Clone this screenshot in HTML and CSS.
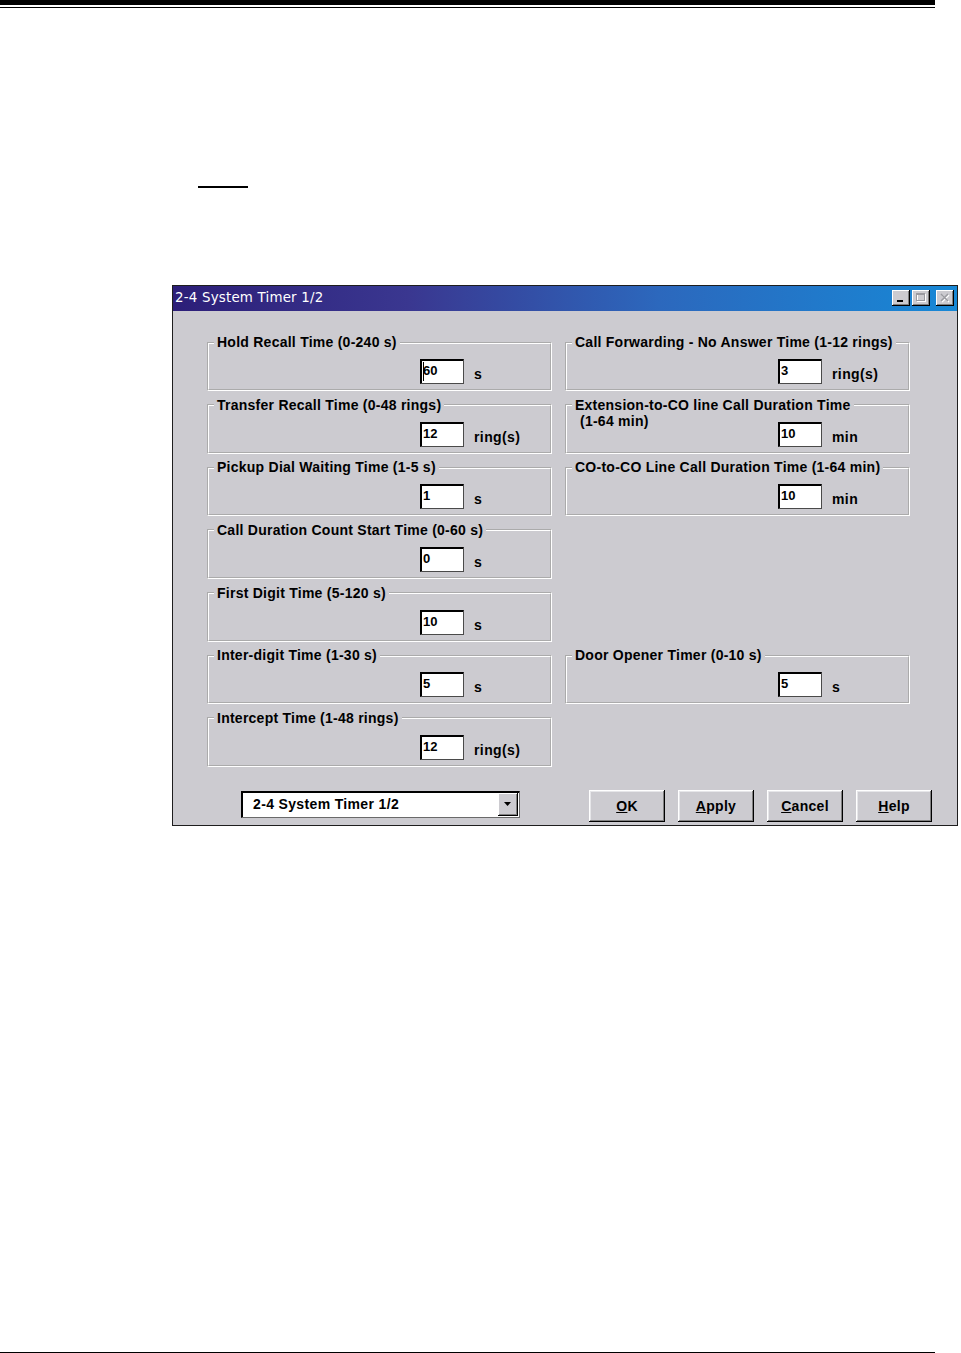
FILE: index.html
```html
<!DOCTYPE html>
<html>
<head>
    <meta charset="UTF-8">
    <title>2-4 System Timer 1/2</title>
    <link rel="stylesheet" href="styles.css">
</head>
<body>

    <div class="page-rule">
        <div class="rule-thick"></div>
        <div class="rule-thin"></div>
    </div>

    <div class="note-mark"></div>

    <div class="dialog">
        <div class="titlebar">
            <span class="title">2-4 System Timer 1/2</span>
            <div class="title-buttons">
                <span class="tb-btn">
                    <svg width="12" height="10" viewBox="0 0 12 10"><rect x="2" y="7" width="6" height="2" fill="#000"/></svg>
                </span>
                <span class="tb-btn">
                    <svg width="12" height="10" viewBox="0 0 12 10"><rect x="2.5" y="1.5" width="8" height="7" fill="none" stroke="#fff"/><rect x="1.5" y="0.5" width="8" height="7" fill="none" stroke="#9a9aa0"/><rect x="1.5" y="0.5" width="8" height="1.5" fill="#9a9aa0"/></svg>
                </span>
                <span class="tb-btn close">
                    <svg width="12" height="10" viewBox="0 0 12 10"><path d="M3 2 L10 9 M10 2 L3 9" stroke="#fff" stroke-width="1.5"/><path d="M2 1 L9 8 M9 1 L2 8" stroke="#9a9aa0" stroke-width="1.5"/></svg>
                </span>
            </div>
        </div>

        <div class="dialog-body">
            <div class="timer-grid">

                <fieldset class="group col-l r1">
                    <legend>Hold Recall Time (0-240 s)</legend>
                    <div class="group-row">
                        <span class="field"><span class="caret"></span>60</span>
                        <span class="unit">s</span>
                    </div>
                </fieldset>

                <fieldset class="group col-l r2">
                    <legend>Transfer Recall Time (0-48 rings)</legend>
                    <div class="group-row">
                        <span class="field">12</span>
                        <span class="unit">ring(s)</span>
                    </div>
                </fieldset>

                <fieldset class="group col-l r3">
                    <legend>Pickup Dial Waiting Time (1-5 s)</legend>
                    <div class="group-row">
                        <span class="field">1</span>
                        <span class="unit">s</span>
                    </div>
                </fieldset>

                <fieldset class="group col-l r4">
                    <legend>Call Duration Count Start Time (0-60 s)</legend>
                    <div class="group-row">
                        <span class="field">0</span>
                        <span class="unit">s</span>
                    </div>
                </fieldset>

                <fieldset class="group col-l r5">
                    <legend>First Digit Time (5-120 s)</legend>
                    <div class="group-row">
                        <span class="field">10</span>
                        <span class="unit">s</span>
                    </div>
                </fieldset>

                <fieldset class="group col-l r6">
                    <legend>Inter-digit Time (1-30 s)</legend>
                    <div class="group-row">
                        <span class="field">5</span>
                        <span class="unit">s</span>
                    </div>
                </fieldset>

                <fieldset class="group col-l r7">
                    <legend>Intercept Time (1-48 rings)</legend>
                    <div class="group-row">
                        <span class="field">12</span>
                        <span class="unit">ring(s)</span>
                    </div>
                </fieldset>

                <fieldset class="group col-r r1">
                    <legend>Call Forwarding - No Answer Time (1-12 rings)</legend>
                    <div class="group-row">
                        <span class="field">3</span>
                        <span class="unit">ring(s)</span>
                    </div>
                </fieldset>

                <fieldset class="group col-r r2">
                    <legend>Extension-to-CO line Call Duration Time</legend>
                    <div class="group-row with-sub">
                        <span class="sub-label">(1-64 min)</span>
                        <span class="field">10</span>
                        <span class="unit">min</span>
                    </div>
                </fieldset>

                <fieldset class="group col-r r3">
                    <legend>CO-to-CO Line Call Duration Time (1-64 min)</legend>
                    <div class="group-row">
                        <span class="field">10</span>
                        <span class="unit">min</span>
                    </div>
                </fieldset>

                <fieldset class="group col-r r6">
                    <legend>Door Opener Timer (0-10 s)</legend>
                    <div class="group-row">
                        <span class="field">5</span>
                        <span class="unit">s</span>
                    </div>
                </fieldset>

            </div>

            <div class="dialog-footer">
                <div class="combo">
                    <span class="combo-text">2-4 System Timer 1/2</span>
                    <span class="combo-arrow">
                        <svg width="8" height="5" viewBox="0 0 8 5"><path d="M0 0 H7 L3.5 4 Z" fill="#000"/></svg>
                    </span>
                </div>
                <div class="buttons">
                    <button><u>O</u>K</button>
                    <button><u>A</u>pply</button>
                    <button><u>C</u>ancel</button>
                    <button><u>H</u>elp</button>
                </div>
            </div>
        </div>
    </div>

    <div class="page-foot"></div>

</body>
</html>
```

FILE: styles.css
```css
:root {
    --face: #cccbd0;
    --ui-font: "Liberation Sans", Arial, Helvetica, sans-serif;
}

body {
    margin: 0;
    height: 1353px;
    display: flex;
    flex-direction: column;
    background-color: #fff;
    font-family: var(--ui-font);
}

.page-rule {
    width: 935px;
}

.rule-thick {
    height: 5px;
    background-color: #000;
}

.rule-thin {
    height: 1px;
    margin-top: 2px;
    background-color: #000;
}

.note-mark {
    width: 50px;
    height: 2px;
    margin: 178px 0 0 198px;
    background-color: #000;
}

.page-foot {
    width: 935px;
    height: 1px;
    margin-top: auto;
    background-color: #000;
}

/* dialog window */

.dialog {
    width: 786px;
    box-sizing: border-box;
    margin: 97px 0 0 172px;
    border: 1px solid #1e1e1e;
    background-color: var(--face);
}

.titlebar {
    height: 25px;
    display: flex;
    align-items: center;
    padding: 0 3px 2px 2px;
    box-sizing: border-box;
    background: linear-gradient(to right, #2c1e78 0%, #3a3790 30%, #2c68bd 62%, #1788d6 100%);
    color: #fff;
}

.title {
    flex: 1;
    font-family: "DejaVu Sans", var(--ui-font);
    font-size: 13.4px;
    letter-spacing: 0.2px;
}

.title-buttons {
    display: flex;
    gap: 2px;
}

.tb-btn {
    width: 18px;
    height: 16px;
    box-sizing: border-box;
    display: flex;
    align-items: center;
    justify-content: center;
    background-color: var(--face);
    box-shadow: inset -1px -1px 0 #000, inset 1px 1px 0 #fff, inset -2px -2px 0 #808080;
}

.tb-btn.close {
    margin-left: 4px;
}

.dialog-body {
    padding: 24px 25px 3px 34px;
}

/* group boxes */

.timer-grid {
    display: grid;
    grid-template-columns: 345px 345px;
    grid-template-rows: repeat(7, 56px);
    column-gap: 13px;
    row-gap: 6.67px;
}

.col-l { grid-column: 1; }
.col-r { grid-column: 2; }
.r1 { grid-row: 1; }
.r2 { grid-row: 2; }
.r3 { grid-row: 3; }
.r4 { grid-row: 4; }
.r5 { grid-row: 5; }
.r6 { grid-row: 6; }
.r7 { grid-row: 7; }

.group {
    margin: 0;
    padding: 0;
    min-width: 0;
    border: 2px groove #fff;
}

.group legend {
    margin-left: 5px;
    padding: 0 3px;
    font-size: 14px;
    line-height: 15px;
    letter-spacing: 0.25px;
    font-weight: bold;
    color: #000;
}

.group-row {
    display: flex;
    align-items: flex-end;
    margin-top: 9px;
    padding-left: 211px;
}

.group-row.with-sub {
    padding-left: 13px;
}

.sub-label {
    width: 198px;
    align-self: flex-start;
    margin-top: -8px;
    font-size: 14px;
    line-height: 15px;
    letter-spacing: 0.25px;
    font-weight: bold;
}

.field {
    position: relative;
    width: 44px;
    height: 25px;
    box-sizing: border-box;
    padding: 3px 0 0 2px;
    background-color: #fff;
    border: 1px solid;
    border-color: #000 #4a4a4a #4a4a4a #000;
    box-shadow: inset 1px 1px 0 #000;
    font-size: 13px;
    line-height: 15px;
    font-weight: bold;
}

.caret {
    position: absolute;
    left: 2px;
    top: 2px;
    width: 1px;
    height: 19px;
    background-color: #000;
}

.unit {
    margin: 0 0 2px 10px;
    font-size: 14px;
    line-height: 15px;
    letter-spacing: 0.4px;
    font-weight: bold;
}

/* footer */

.dialog-footer {
    display: flex;
    align-items: flex-start;
    margin-top: 23px;
}

.combo {
    width: 279px;
    height: 27px;
    box-sizing: border-box;
    margin: 1px 0 0 34px;
    display: flex;
    align-items: center;
    background-color: #fff;
    border: 1px solid;
    border-color: #000 #6a6a6a #6a6a6a #000;
    box-shadow: inset 1px 1px 0 #000;
}

.combo-text {
    flex: 1;
    padding-left: 11px;
    font-size: 14px;
    letter-spacing: 0.35px;
    font-weight: bold;
}

.combo-arrow {
    width: 20px;
    height: 23px;
    box-sizing: border-box;
    margin-right: 1px;
    display: flex;
    align-items: center;
    justify-content: center;
    background-color: var(--face);
    box-shadow: inset -1px -1px 0 #000, inset 1px 1px 0 #fff, inset -2px -2px 0 #808080;
}

.buttons {
    display: flex;
    gap: 13px;
    margin-left: auto;
}

.buttons button {
    width: 76px;
    height: 32px;
    padding: 0;
    border: 0;
    background-color: var(--face);
    box-shadow: inset -1px -1px 0 #000, inset 1px 1px 0 #fff, inset -2px -2px 0 #808080, inset 2px 2px 0 #e6e6e9;
    font-family: var(--ui-font);
    font-size: 14px;
    letter-spacing: 0.3px;
    font-weight: bold;
    color: #000;
}
```
